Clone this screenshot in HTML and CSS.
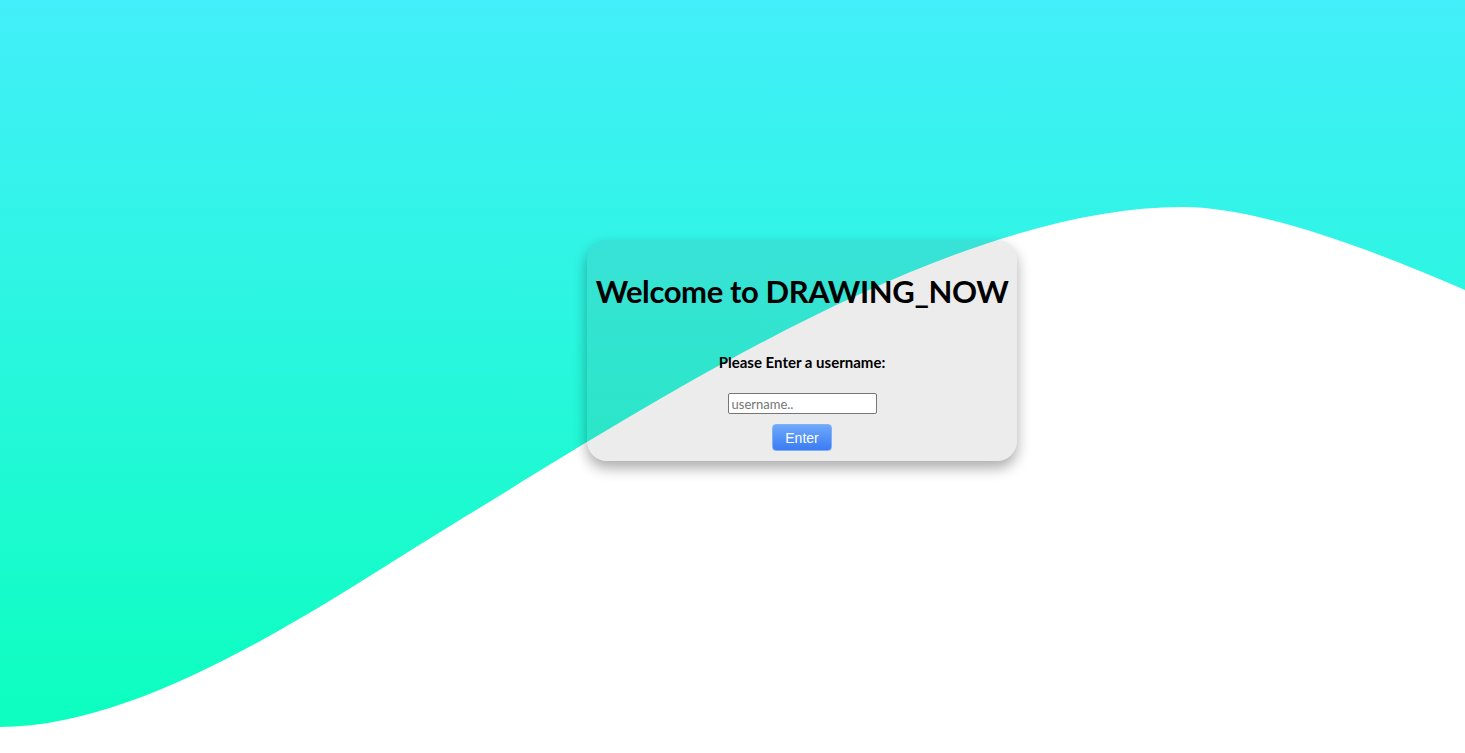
FILE: index.html
```html
<!DOCTYPE html>
<html lang="en">
<head>
<meta charset="utf-8">
<title>DRAWING_NOW</title>
<link rel="stylesheet" href="styles.css">
</head>
<body>
<svg class="wave" viewBox="0 0 1465 753" preserveAspectRatio="none" aria-hidden="true">
  <path d="M0,727 C150,727 330,599 450,526 C650,404 950,207 1183,207 C1250,207 1350,240 1465,290 L1465,753 L0,753 Z" fill="#ffffff"/>
</svg>
<main class="page">
  <section class="card">
    <h1 class="title">Welcome to DRAWING_NOW</h1>
    <p class="label">Please Enter a username:</p>
    <input class="name-input" type="text" placeholder="username..">
    <button class="enter-btn" type="button">Enter</button>
  </section>
</main>
</body>
</html>
```

FILE: styles.css
```css
html, body {
  margin: 0;
  padding: 0;
  height: 100%;
}

body {
  background: linear-gradient(to bottom, #43effa 0%, #0affbd 100%);
  font-family: "Lato", "Open Sans", sans-serif;
  position: relative;
  overflow: hidden;
}

.wave {
  position: absolute;
  left: 0;
  top: 0;
  width: 100%;
  height: 100%;
  z-index: 0;
}

.page {
  position: relative;
  z-index: 1;
  display: flex;
  align-items: flex-start;
  padding: 240px 0 0 587px;
}

.card {
  width: 430px;
  box-sizing: border-box;
  padding: 29px 0 10px;
  border-radius: 20px;
  background: rgba(110, 110, 110, 0.13);
  box-shadow: 0 7px 14px rgba(0, 0, 0, 0.33);
  display: flex;
  flex-direction: column;
  align-items: center;
}

.title {
  margin: 0;
  font-size: 31px;
  font-weight: 700;
  letter-spacing: -0.4px;
  line-height: 44px;
  color: #000;
  white-space: nowrap;
}

.label {
  margin: 39px 0 0;
  font-size: 15px;
  font-weight: 700;
  line-height: 20px;
  color: #000;
}

.name-input {
  margin-top: 21px;
  width: 149px;
  height: 21px;
  box-sizing: border-box;
  border: 1px solid #767676;
  border-radius: 2px;
  padding: 1px 3px;
  font-family: "Lato", sans-serif;
  font-size: 13px;
  background: #fff;
}

.name-input::placeholder {
  color: #757575;
}

.enter-btn {
  margin-top: 10px;
  width: 60px;
  height: 27px;
  border: 1px solid #7fb0f8;
  border-radius: 4px;
  background: linear-gradient(to bottom, #6ea8f9 0%, #3a7cf3 100%);
  color: #fff;
  font-family: "Liberation Sans", Arial, sans-serif;
  font-size: 14px;
  padding: 0;
}
```
